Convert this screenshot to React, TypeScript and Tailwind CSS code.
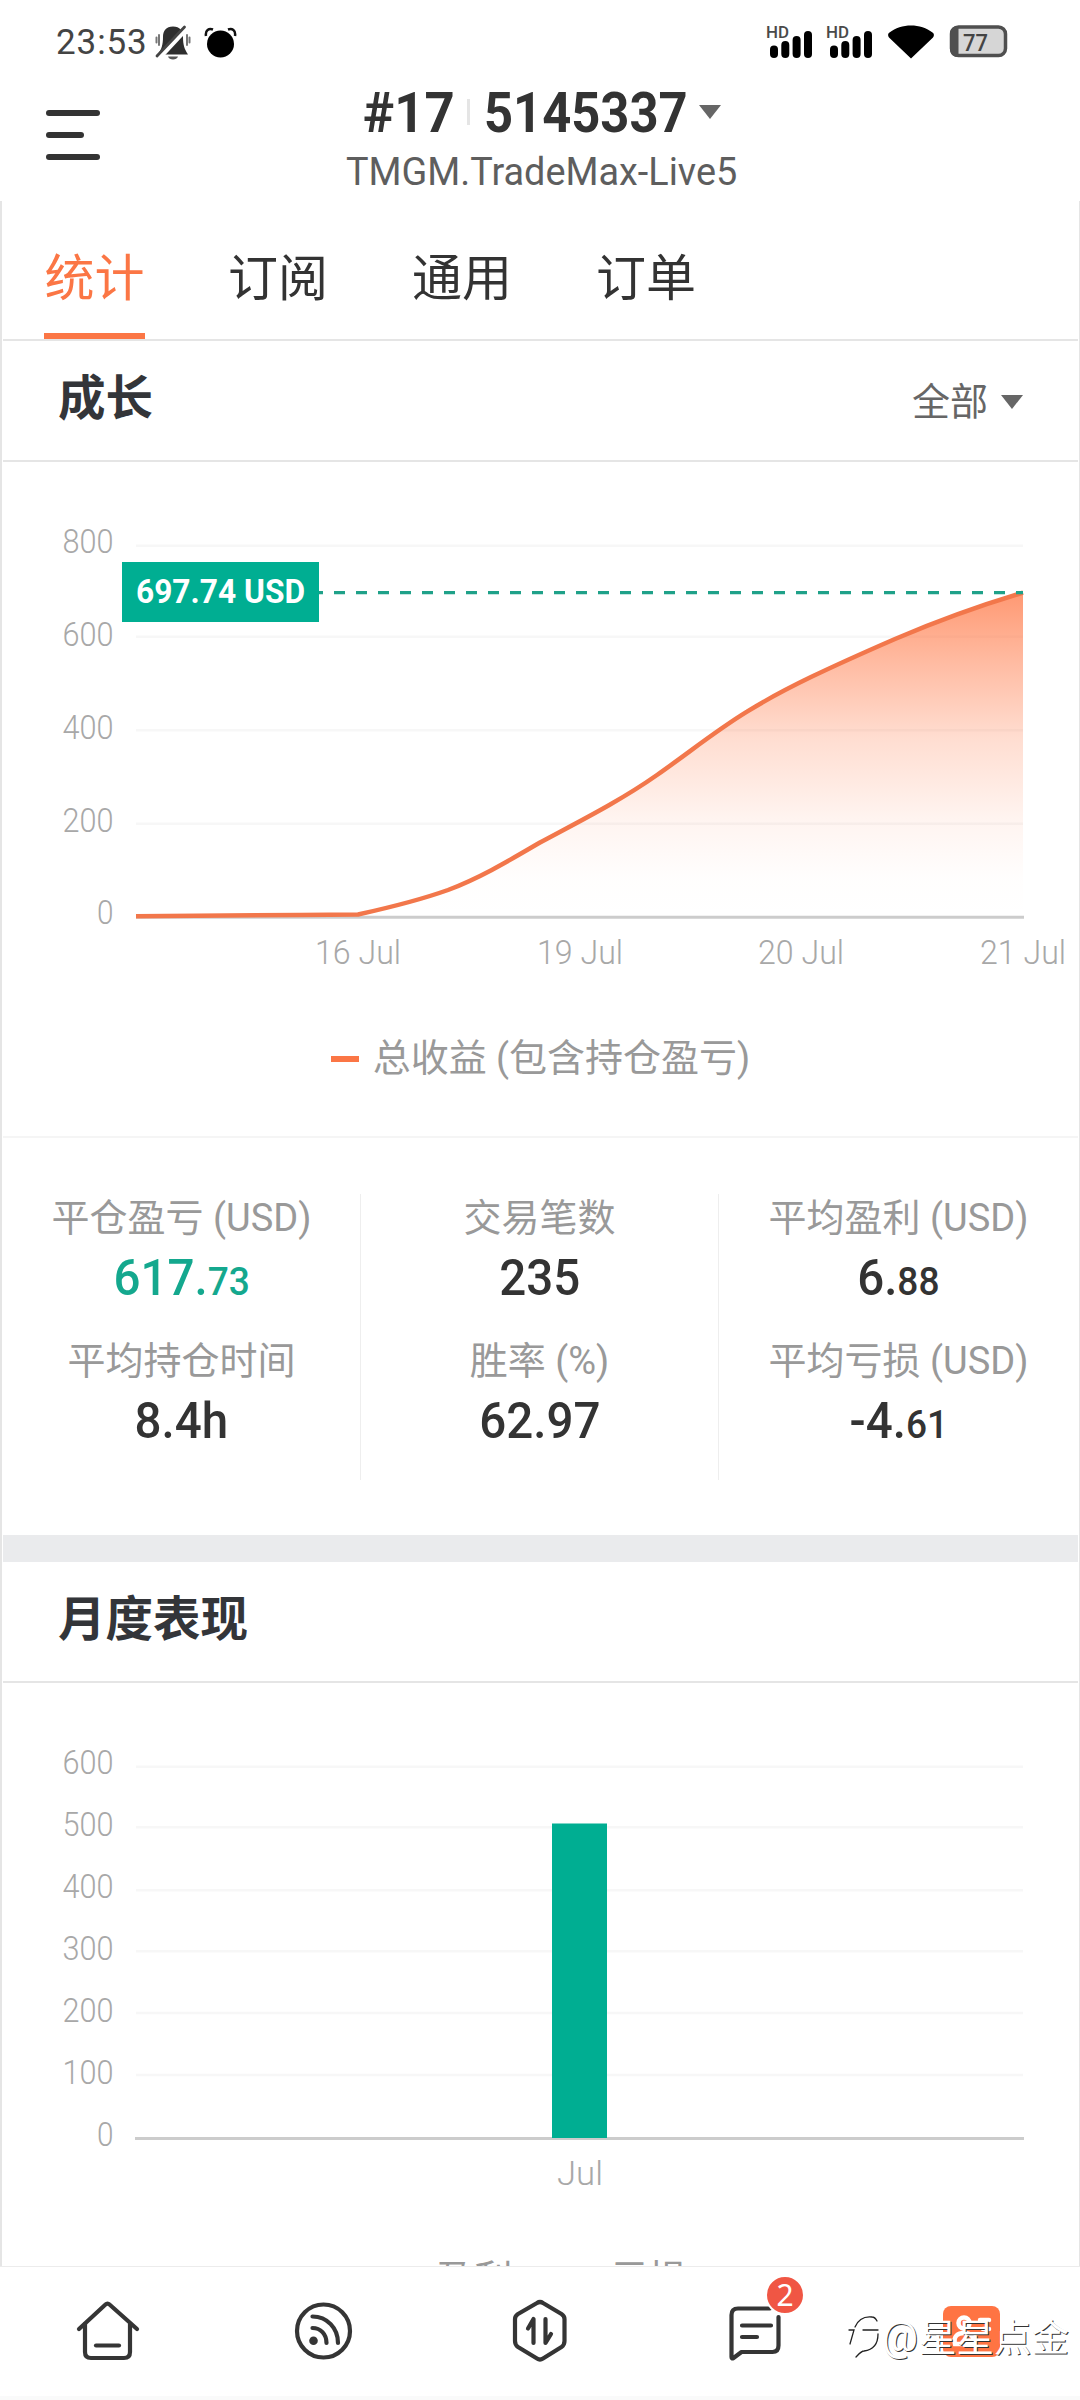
const tabs = ["统计", "订阅", "通用", "订单"]

const stats = [
  [
    { label: "平仓盈亏 (USD)", value: "617.", decimals: "73", positive: true },
    { label: "平均持仓时间", value: "8.4h" },
  ],
  [
    { label: "交易笔数", value: "235" },
    { label: "胜率 (%)", value: "62.97" },
  ],
  [
    { label: "平均盈利 (USD)", value: "6.", decimals: "88" },
    { label: "平均亏损 (USD)", value: "-4.", decimals: "61" },
  ],
]

const growthTicks = [
  { label: "800", line: 545.7, text: 552.7 },
  { label: "600", line: 636.7, text: 645.7 },
  { label: "400", line: 730.3, text: 739 },
  { label: "200", line: 823.7, text: 832 },
]

const monthTicks = [
  { label: "600", line: 1766.7, text: 1774 },
  { label: "500", line: 1827.3, text: 1836 },
  { label: "400", line: 1890.3, text: 1898 },
  { label: "300", line: 1951.3, text: 1960 },
  { label: "200", line: 2013, text: 2022 },
  { label: "100", line: 2075, text: 2084 },
]

const growthDates = [
  { label: "16 Jul", x: 358 },
  { label: "19 Jul", x: 580 },
  { label: "20 Jul", x: 801 },
  { label: "21 Jul", x: 1023 },
]

const curve =
  "C 392 907 420 900 448 890 C 482 877 510 860 540 842.5 C 580 821 620 801 657 775 C 690 752 714 732 747 711.7 C 785 688 833 666 895 639 C 935 622 985 604 1023 592.7"

const Signal = () => (
  <svg viewBox="0 0 47 34" className="h-[34px] w-[47px] overflow-visible">
    <text x="0" y="13" fontSize="17" fontWeight="500" fill="#4a4a4a" textLength="23" lengthAdjust="spacingAndGlyphs">
      HD
    </text>
    <rect x="4" y="20.5" width="8" height="12.5" rx="4" />
    <rect x="15.3" y="16" width="8" height="17" rx="4" />
    <rect x="26.6" y="11" width="8" height="22" rx="4" />
    <rect x="38" y="6" width="8" height="27" rx="4" />
  </svg>
)

const StatusBar = () => (
  <div className="flex h-[84px] items-start justify-between pl-[56px] pr-[71px] pt-[25px]">
    <div className="flex items-start">
      <span className="w-[99px] text-[35px] leading-[36px] tracking-[0.9px] text-[#444]">23:53</span>
      {/* Muted bell */}
      <svg viewBox="0 0 36 36" className="h-[36px] w-[36px]">
        <path d="M18 1.500c-7 0-10 4.500-10 10.500 0 8-1.500 12-5 17.500h30c-3.500-5.500-5-9.500-5-17.500 0-6-3-10.500-10-10.500z" fill="#2e2e2e" />
        <path d="M13 31.500h10c-1 4-9 4-10 0z" fill="#555" />
        <path d="M1.500 12.500v5M4 10v10M34.500 12.500v5M32 10v10" stroke="#777" strokeWidth="2" strokeLinecap="round" />
        <path d="M4 33 31 4" stroke="#fff" strokeWidth="5" />
        <path d="M2 31 29.500 2" stroke="#444" strokeWidth="2.800" strokeLinecap="round" />
      </svg>
      {/* Alarm */}
      <svg viewBox="0 0 34 36" className="ml-[13px] h-[36px] w-[34px]">
        <circle cx="16.500" cy="19" r="13.500" />
        <path d="M2 11C1 5 5 3 9 4.500M31 11c1-6-3-8-7-6.500" fill="none" stroke="#111" strokeWidth="2.500" />
      </svg>
    </div>
    <div className="flex items-start">
      <Signal />
      <div className="w-[13px]" />
      <Signal />
      <svg viewBox="0 0 46 34" className="ml-[15px] h-[34px] w-[46px]">
        <path d="M23 33.500 1 12.500c-1.500-2-1-4 .5-5C13-2 33-2 44.500 7.500c1.500 1 2 3 .5 5z" />
      </svg>
      <svg viewBox="0 0 60 34" className="ml-[15px] h-[34px] w-[60px]">
        <rect x="2.500" y="2" width="54" height="28.500" rx="7" fill="#d6d6d6" stroke="#4f4f4f" strokeWidth="3.500" />
        <path d="M9.500 1v31H9C4 32 1 29 1 24V9c0-5 3-8 8-8z" fill="#4f4f4f" />
        <text x="14" y="26" fontSize="23" fontWeight="500" fill="#444" textLength="25" lengthAdjust="spacingAndGlyphs">
          77
        </text>
      </svg>
    </div>
  </div>
)

const Caret = () => (
  <svg viewBox="0 0 22 14" className="h-[14px] w-[22px]">
    <path d="M0 0h22L11 14z" fill="#666" />
  </svg>
)

const Header = () => (
  <header className="flex h-[117px] pl-[46px]">
    <div className="flex w-[300px] flex-col gap-[16px] pt-[26px]">
      <div className="h-[6px] w-[54px] rounded-full bg-[#333]"></div>
      <div className="h-[6px] w-[38px] rounded-full bg-[#333]"></div>
      <div className="h-[6px] w-[54px] rounded-full bg-[#333]"></div>
    </div>
    <div>
      <div className="flex h-[56px] items-center pl-[17px] font-bold text-[#333]">
        <span className="w-[104px] pt-px">
          <span className="inline-block origin-left scale-x-[0.94] text-[56px] leading-[56px]">#17</span>
        </span>
        <span className="h-[26px] w-[3px] bg-[#e5e5e5]"></span>
        <span className="ml-[14px] w-[215px] pt-px">
          <span className="inline-block origin-left scale-x-[0.905] text-[56px] leading-[56px]">5145337</span>
        </span>
        <Caret />
      </div>
      <div className="w-[392px] origin-left scale-x-[0.995] whitespace-nowrap text-[38px] leading-[64px] text-[#5e5e5e]">
        TMGM.TradeMax-Live5
      </div>
    </div>
  </header>
)

const TabBar = () => (
  <nav className="flex h-[140px] gap-[83px] border-b-2 border-[#e5e5e5] pl-[41px]">
    {tabs.map((tab, i) => (
      <div
        key={tab}
        className={
          i === 0
            ? "h-[138px] w-[101px] whitespace-nowrap border-b-[6px] border-[#fb7645] text-center text-[50px] leading-[156px] text-[#fb7645]"
            : "h-[138px] w-[101px] whitespace-nowrap text-[50px] leading-[156px] text-[#333]"
        }
      >
        {tab}
      </div>
    ))}
  </nav>
)

const GrowthChart = () => (
  <svg viewBox="3 462 1075 560" className="block h-[560px] w-full">
    <defs>
      <linearGradient id="area" x1="0" y1="592" x2="0" y2="917" gradientUnits="userSpaceOnUse">
        <stop offset="0" stopColor="#ff7846" stopOpacity="0.76" />
        <stop offset="0.22" stopColor="#ff7846" stopOpacity="0.5" />
        <stop offset="0.45" stopColor="#ff7846" stopOpacity="0.25" />
        <stop offset="0.7" stopColor="#ff7846" stopOpacity="0.08" />
        <stop offset="0.88" stopColor="#ff7846" stopOpacity="0.01" />
        <stop offset="1" stopColor="#ff7846" stopOpacity="0" />
      </linearGradient>
    </defs>
    {growthTicks.map((tick) => (
      <g key={tick.label}>
        <path d={`M136 ${tick.line}H1023`} stroke="#f7f7f7" strokeWidth="2.500" />
        <text x="62.500" y={tick.text} fontSize="33.500" fontWeight="300" fill="#a8a8a8" textLength="51" lengthAdjust="spacingAndGlyphs">
          {tick.label}
        </text>
      </g>
    ))}
    <text x="97" y="924" fontSize="33.500" fontWeight="300" fill="#a8a8a8" textLength="16.500" lengthAdjust="spacingAndGlyphs">
      0
    </text>
    <path d="M136 917.300H1024" stroke="#ccc" strokeWidth="3" />
    <path d={`M358 914.500 ${curve} V917H358Z`} fill="url(#area)" />
    <path d={`M136 916.300 L300 915 358 914.500 ${curve}`} fill="none" stroke="#f2774b" strokeWidth="4.500" strokeLinejoin="bevel" />
    <path d="M136 592.700H1023" stroke="#1fa189" strokeWidth="3.200" strokeDasharray="11 11" />
    <rect x="122" y="562" width="197" height="60" fill="#00ae92" />
    <text x="136" y="602.800" fontSize="33.500" fontWeight="700" fill="#fff" textLength="169" lengthAdjust="spacingAndGlyphs">
      697.74 USD
    </text>
    {growthDates.map((date) => (
      <text
        key={date.label}
        x={date.x - 43}
        y="963.500"
        fontSize="33.500"
        fontWeight="300"
        fill="#a8a8a8"
        textLength="86"
        lengthAdjust="spacingAndGlyphs"
      >
        {date.label}
      </text>
    ))}
  </svg>
)

const MonthChart = () => (
  <svg viewBox="3 1683 1075 560" className="block h-[560px] w-full">
    {monthTicks.map((tick) => (
      <g key={tick.label}>
        <path d={`M136 ${tick.line}H1023`} stroke="#f7f7f7" strokeWidth="2.500" />
        <text x="62.500" y={tick.text} fontSize="33.500" fontWeight="300" fill="#a8a8a8" textLength="51" lengthAdjust="spacingAndGlyphs">
          {tick.label}
        </text>
      </g>
    ))}
    <text x="97" y="2145.500" fontSize="33.500" fontWeight="300" fill="#a8a8a8" textLength="16.500" lengthAdjust="spacingAndGlyphs">
      0
    </text>
    <path d="M135 2138.500H1024" stroke="#ccc" strokeWidth="3" />
    <rect x="552" y="1823.500" width="55" height="314.500" fill="#00ae92" />
    <text x="557" y="2184.500" fontSize="33.500" fontWeight="300" fill="#a8a8a8" textLength="46" lengthAdjust="spacingAndGlyphs">
      Jul
    </text>
  </svg>
)

const SectionTitle = ({ title, filter }: { title: string; filter?: string }) => (
  <div className="flex h-[121px] items-center justify-between border-b-2 border-[#e5e5e5] pb-[4px] pl-[55px] pr-[55px]">
    <h2 className="text-[47.5px] leading-[60px] font-bold text-[#333539]">{title}</h2>
    {filter && (
      <div className="flex items-center gap-[13px] pt-[6px] text-[38px] leading-[50px] text-[#666]">
        {filter}
        <Caret />
      </div>
    )}
  </div>
)

const Stats = () => (
  <div className="flex h-[399px] border-t-2 border-[#f5f5f5] pt-[56px]">
    {stats.map((column, i) => (
      <div
        key={i}
        className={
          i === 2
            ? "flex h-[286px] w-[359px] flex-col items-center"
            : "flex h-[286px] w-[358px] flex-col items-center border-r border-[#eee]"
        }
      >
        {column.map((item) => (
          <div key={item.label} className="flex h-[143px] flex-col items-center">
            <div className="text-[38px] leading-[48px] text-[#999]">{item.label}</div>
            <div
              className={
                item.positive
                  ? "mt-[6px] text-[50px] leading-[60px] font-medium text-[#14a88e]"
                  : "mt-[6px] text-[50px] leading-[60px] font-medium text-[#333]"
              }
            >
              <span className="inline-block scale-x-[0.95]">
                {item.value}
                {item.decimals && <span className="text-[39px]">{item.decimals}</span>}
              </span>
            </div>
          </div>
        ))}
      </div>
    ))}
  </div>
)

const BottomNav = () => (
  <nav className="flex h-[134px] border-t border-[#ececec] border-b-4 border-b-[#fafafa] bg-white pt-[28px]">
    <div className="flex flex-1 justify-center">
      <svg viewBox="0 0 70 70" className="h-[70px] w-[70px]" fill="none" stroke="#353535" strokeWidth="4.200" strokeLinecap="round" strokeLinejoin="round">
        <path d="M6 34 32.500 9.500c1.300-1.300 2.700-1.300 4 0L64 34" />
        <path d="M12 29v28q0 6 6 6h33q6 0 6-6V29" />
        <path d="M23 50.500h23" />
      </svg>
    </div>
    <div className="flex flex-1 justify-center">
      <svg viewBox="0 0 70 70" className="h-[70px] w-[70px]" fill="none" stroke="#353535" strokeWidth="4.200" strokeLinecap="round">
        <circle cx="34.500" cy="36" r="26.500" />
        <path d="M23.500 33c8 0 14 6 14 15M23.500 21.500c14.500 0 25.500 11.500 25.500 26.500" />
        <circle cx="24.500" cy="45.800" r="4.300" fill="#353535" stroke="none" />
      </svg>
    </div>
    <div className="flex flex-1 justify-center">
      <svg viewBox="0 0 70 70" className="h-[70px] w-[70px]" fill="none" stroke="#353535" strokeWidth="4.200" strokeLinecap="round" strokeLinejoin="round">
        <path d="M32 8q3-2 6 0l18.500 11q3 2 3 5v22q0 4-3 6L38 63.500q-3 2-6 0L13 52q-3-2-3-6V24q0-3 3-5z" />
        <path d="M23 33.500l5.500-9.500V48M40.500 24v24l5.500-9" />
      </svg>
    </div>
    <div className="flex flex-1 justify-center">
      <div className="relative h-[70px] w-[70px]">
        <svg viewBox="0 0 70 70" className="h-[70px] w-[70px]" fill="none" stroke="#353535" strokeWidth="4.200" strokeLinecap="round" strokeLinejoin="round">
          <path d="M57.500 22v28.500q0 6.500-6 6.500H20.500L12.500 63q-2 1-2-1V20q0-6.500 6.500-6.500H49" />
          <path d="M21 30.500h29M21 42h15" />
        </svg>
        <span className="absolute left-[44px] top-[-20px] h-[40px] w-[40px] rounded-full border-2 border-white bg-[#f05644] text-center font-['Noto_Sans'] text-[30px] leading-[36px] text-white">
          2
        </span>
      </div>
    </div>
    <div className="flex flex-1 justify-center">
      <svg viewBox="0 0 70 70" className="h-[70px] w-[70px]">
        <rect x="6" y="11" width="57" height="51" rx="8" fill="#ff7443" />
        <g fill="none" stroke="#fff" strokeWidth="4.500" strokeLinecap="round">
          <circle cx="27" cy="28" r="5.500" />
          <path d="M18 49c-2-8 3-11 9-11s11 3 9 11zM43 25h9M46 34h6" />
        </g>
      </svg>
    </div>
  </nav>
)

// White text with a dark lower-right edge
const Watermark = () => (
  <div className="absolute left-[846px] top-[2307px] flex items-center">
    <svg viewBox="0 0 36 62" className="h-[62px] w-[36px]" fill="none" stroke="#222" strokeWidth="1.300" strokeLinecap="round">
      <path d="M3 23h5l-4 14M9 20C12 13 17 9 26 10M26 10c3 0 4 2 5 4M17 23h15M32 27c0 11-6 16-14 17-3 0-6 4-8 6" />
    </svg>
    <span className="whitespace-nowrap text-[37.5px] leading-[60px] text-white [text-shadow:1px_1px_0_#333]">
      <span className="mr-px text-[40px]">@</span>星星点金
    </span>
  </div>
)

const App = () => {
  return (
    <div className="relative h-[2400px] w-[1080px] overflow-hidden bg-white font-[Roboto,'Noto_Sans_CJK_SC',sans-serif]">
      <StatusBar />
      <Header />
      <main className="h-[2065px] overflow-hidden border-l-2 border-r border-[#e5e5e5] pl-px pr-px">
        <TabBar />
        <SectionTitle title="成长" filter="全部" />
        <GrowthChart />
        <div className="flex h-[114px] justify-center pt-[11px] text-[38px] leading-[50px] text-[#999]">
          <span className="mr-[14px] mt-[23px] h-[6px] w-[28px] bg-[#fb7645]"></span>
          总收益 (包含持仓盈亏)
        </div>
        <Stats />
        <div className="h-[27px] bg-[#eaebed]"></div>
        <SectionTitle title="月度表现" />
        <MonthChart />
        <div className="flex justify-center pt-[11px] text-[38px] leading-[50px] text-[#999]">
          <span className="mr-[14px] mt-[24px] h-[6px] w-[28px] bg-[#00ae92]"></span>
          盈利
          <span className="ml-[48px] mr-[14px] mt-[24px] h-[6px] w-[36px] bg-[#fb7645]"></span>
          亏损
        </div>
      </main>
      <BottomNav />
      <Watermark />
    </div>
  )
}

export default App
